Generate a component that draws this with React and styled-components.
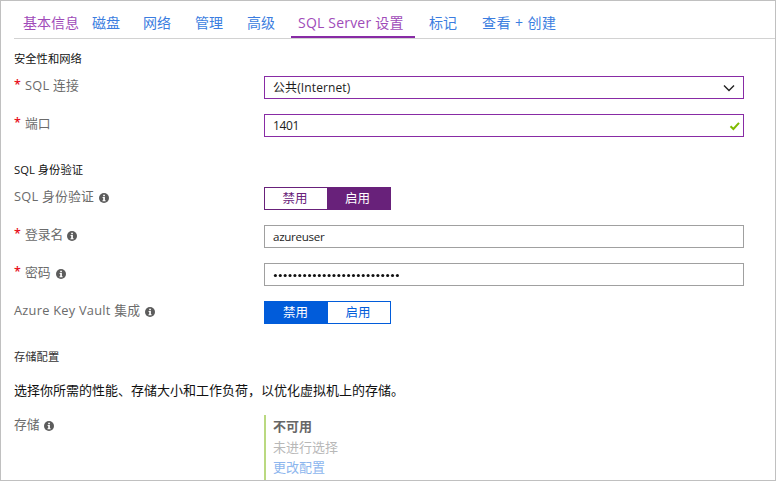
import React from 'react';
import styled, { createGlobalStyle } from 'styled-components';

const GlobalStyle = createGlobalStyle`
  * { box-sizing: border-box; }
  body {
    margin: 0;
    background: #fff;
    font-family: "Open Sans", "Noto Sans CJK SC", sans-serif;
  }
`;

const Panel = styled.main`
  width: 776px;
  height: 481px;
  padding-left: 13px;
  border: 1px solid #c0c0c0;
  background: #fff;
  overflow: hidden;
  white-space: nowrap;
`;

const TabBar = styled.nav`
  display: flex;
  height: 38px;
  padding-left: 2px;
  border-bottom: 1px solid #d2d2d2;
`;

const Tab = styled.a`
  flex: none;
  width: ${(p) => p.$width}px;
  height: 37px;
  padding: 12px 0 0 7px;
  border-bottom: ${(p) => (p.$active ? '2px solid #882ba5' : '0')};
  color: ${(p) => (p.$visited ? '#a04bb9' : '#3b7de0')};
  font-size: 14px;
  line-height: 20px;
  letter-spacing: ${(p) => p.$tracking || 0}px;
`;

const TabGap = styled.span`
  flex: none;
  width: 7px;
`;

const Heading = styled.h2`
  height: ${(p) => p.$height}px;
  margin: 0;
  padding-top: ${(p) => p.$top}px;
  color: ${(p) => p.$color || '#111'};
  font-size: 11.3px;
  font-weight: 400;
  line-height: 16px;
`;

const Row = styled.div`
  display: flex;
  height: 38px;
`;

const Label = styled.label`
  display: flex;
  width: 250px;
  height: 19px;
  align-items: center;
  color: #6b6b6b;
  font-size: 12.8px;
  line-height: 19px;
  letter-spacing: ${(p) => p.$tracking || 0}px;
`;

const Required = styled.span`
  width: 11px;
  padding-bottom: 2px;
  color: #e81123;
  font-size: 12.5px;
  font-weight: 600;
  line-height: 17px;
  letter-spacing: 0;
`;

const InfoSvg = styled.svg`
  width: 10px;
  height: 10px;
  margin: 3px 0 0 ${(p) => p.$gap}px;
`;

const Field = styled.div`
  display: flex;
  width: 480px;
  height: 23px;
  align-items: center;
  justify-content: space-between;
  padding: 1px ${(p) => p.$right || 8}px 0 8px;
  border: 1px solid ${(p) => (p.$edited ? '#882ba5' : '#a0a0a0')};
  color: #1c1c1c;
  font-size: ${(p) => p.$size || 12}px;
  line-height: 18px;
  letter-spacing: ${(p) => p.$tracking || 0}px;
`;

const Dots = styled.svg`
  width: 128px;
  height: 5px;
`;

const Chevron = styled.svg`
  width: 12px;
  height: 8px;
`;

const Check = styled.svg`
  width: 11px;
  height: 9px;
`;

const Switch = styled.div`
  display: flex;
  width: 127px;
  height: 23px;
  border: 1px solid ${(p) => p.$color};
`;

const Option = styled.button`
  flex: none;
  width: ${(p) => p.$width}px;
  height: 21px;
  padding: 1px 2px 0 0;
  border: 0;
  background: ${(p) => (p.$on ? p.$color : '#fff')};
  color: ${(p) => (p.$on ? '#fff' : p.$color)};
  font: 12.5px/20px "Open Sans", "Noto Sans CJK SC", sans-serif;
`;

const Description = styled.p`
  height: 35px;
  margin: 0;
  color: #111;
  font-size: 13px;
  line-height: 20px;
`;

const Storage = styled.div`
  width: 200px;
  height: 65px;
  padding: 1px 0 0 7px;
  border-left: 2px solid #bad980;
`;

const StorageLine = styled.div`
  height: ${(p) => (p.$bold ? 21 : 20)}px;
  color: ${(p) => p.$color};
  font-size: 13px;
  font-weight: ${(p) => (p.$bold ? 700 : 400)};
  line-height: 20px;
`;

function Info({ gap = 4 }) {
  return (
    <InfoSvg viewBox="0 0 10 10" $gap={gap}>
      <circle cx="5" cy="5" r="5" fill="#5c5c5c" />
      <path d="M4.2 1.7h1.7v1.5H4.2zM3.6 4.1h2.3v3.2h.7v1H3.5v-1h.7V5.1h-.6z" fill="#fff" />
    </InfoSvg>
  );
}

function Toggle({ color, enabled }) {
  return (
    <Switch $color={color}>
      <Option $width={enabled ? 62 : 63} $color={color} $on={!enabled}>禁用</Option>
      <Option $width={enabled ? 63 : 62} $color={color} $on={enabled}>启用</Option>
    </Switch>
  );
}

const tabs = [
  { text: '基本信息', width: 69, visited: true },
  { text: '磁盘', width: 51 },
  { text: '网络', width: 52 },
  { text: '管理', width: 52 },
  { text: '高级', width: 51 },
  { text: 'SQL Server 设置', width: 124, visited: true, active: true, tracking: 0.2 },
  { text: '标记', width: 53, offset: true },
  { text: '查看 + 创建', width: 90, tracking: 0.45 },
];

export default function App() {
  return (
    <>
      <GlobalStyle />
      <Panel>
        <TabBar>
          {tabs.map((t) => (
            <React.Fragment key={t.text}>
              {t.offset && <TabGap />}
              <Tab $width={t.width} $visited={t.visited} $active={t.active} $tracking={t.tracking}>
                {t.text}
              </Tab>
            </React.Fragment>
          ))}
        </TabBar>

        <Heading $height={37} $top={12}>安全性和网络</Heading>
        <Row>
          <Label $tracking={0.25}><Required>*</Required>SQL 连接</Label>
          <Field $edited $right={8} $tracking={0.1}>
            公共(Internet)
            <Chevron viewBox="0 0 12 8">
              <path d="M1 1.5 6 6.5 11 1.5" fill="none" stroke="#222" strokeWidth="1.4" />
            </Chevron>
          </Field>
        </Row>
        <Row>
          <Label><Required>*</Required>端口</Label>
          <Field $edited $right={3} $tracking={-0.35}>
            1401
            <Check viewBox="0 0 11 9">
              <path d="M1.5 4.2 4.4 7 10 .8" fill="none" stroke="#7fba00" strokeWidth="2" />
            </Check>
          </Field>
        </Row>

        <Heading $height={35} $top={10}>SQL 身份验证</Heading>
        <Row>
          <Label $tracking={0.25}>SQL 身份验证<Info gap={5} /></Label>
          <Toggle color="#68217a" enabled />
        </Row>
        <Row>
          <Label><Required>*</Required>登录名<Info /></Label>
          <Field $size={11.6} $tracking={-0.3}>azureuser</Field>
        </Row>
        <Row>
          <Label><Required>*</Required>密码<Info gap={5} /></Label>
          <Field>
            <Dots viewBox="0 0 128 5">
              {Array.from({ length: 26 }, (_, i) => (
                <circle key={i} cx={2.4 + i * 4.88} cy="2.5" r="1.55" fill="#111" />
              ))}
            </Dots>
          </Field>
        </Row>
        <Row>
          <Label $tracking={0.25}>Azure Key Vault 集成<Info gap={5} /></Label>
          <Toggle color="#015cda" enabled={false} />
        </Row>

        <Heading $height={41} $top={10} $color="#333">存储配置</Heading>
        <Description>选择你所需的性能、存储大小和工作负荷，以优化虚拟机上的存储。</Description>
        <Row>
          <Label>存储<Info /></Label>
          <Storage>
            <StorageLine $color="#666" $bold>不可用</StorageLine>
            <StorageLine $color="#b8b8b8">未进行选择</StorageLine>
            <StorageLine $color="#8db6ee">更改配置</StorageLine>
          </Storage>
        </Row>
      </Panel>
    </>
  );
}
